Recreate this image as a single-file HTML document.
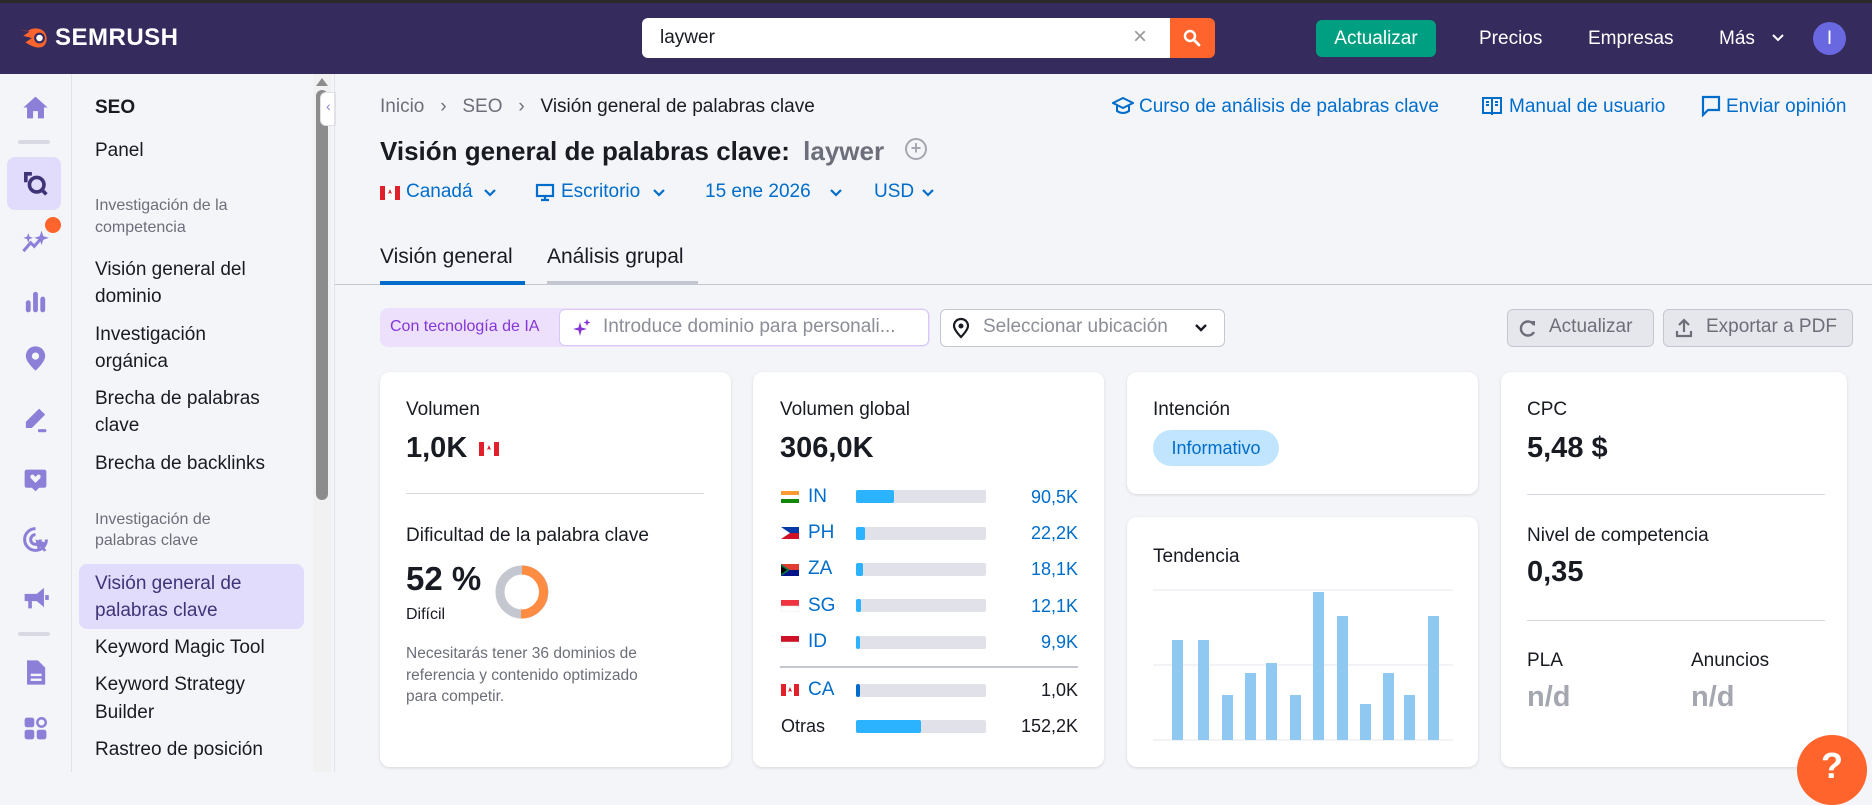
<!DOCTYPE html>
<html><head><meta charset="utf-8"><style>
*{box-sizing:border-box;margin:0;padding:0}
body{width:1872px;height:772px;overflow:hidden;background:#f4f5f9;font-family:"Liberation Sans",Arial,sans-serif;color:#191b23;position:relative}
.a{position:absolute;white-space:nowrap}
.top{left:0;top:0;width:1872px;height:74px;background:#352b5c;border-top:3px solid #2a2a2a}
.nav{font-size:19px;color:#191b23}
.sec{font-size:16px;color:#6c6e79}
.card{position:absolute;background:#fff;border-radius:10px;box-shadow:0 1px 3px rgba(0,0,0,.12)}
.lbl{font-size:19px}
.big{font-size:29px;font-weight:bold}
.blue{color:#006dca}
.bar{position:absolute;left:856px;width:130px;height:13px;background:#e0e1e9;border-radius:2px}
.bar i{position:absolute;left:0;top:0;height:13px;background:#2bb3ff;border-radius:2px}
.flag{position:absolute;left:781px;width:18px;height:12px}
.cc{font-size:19px;color:#006dca;left:808px}
.val{font-size:18px;right:794px;text-align:right}
.ic{position:absolute;left:21px;width:29px;height:29px}
</style></head><body>
<div class="a top"></div>
<!-- logo -->
<svg class="a" style="left:16px;top:25px" width="34" height="26" viewBox="0 0 30 24"><path d="M2 4 L12 6 L6 10 L14 12 L8 16 C14 20 20 22 24 20 C30 16 28 6 22 4 C16 2 12 4 10 6 Z" fill="#ff642d"/><circle cx="21" cy="12" r="5" fill="#352b5c"/><circle cx="21" cy="12" r="3" fill="#fff"/></svg>
<div class="a" style="left:55px;top:24px;font-size:24px;font-weight:bold;color:#fff;letter-spacing:0.5px">SEMRUSH</div>
<!-- search -->
<div class="a" style="left:642px;top:18px;width:530px;height:40px;background:#fff;border-radius:6px 0 0 6px"></div>
<div class="a" style="left:660px;top:27px;font-size:19px;color:#191b23">laywer</div>
<div class="a" style="left:1133px;top:23px;font-size:24px;color:#999">×</div>
<div class="a" style="left:1170px;top:18px;width:45px;height:40px;background:#ff642d;border-radius:0 6px 6px 0"></div>
<svg class="a" style="left:1182px;top:28px" width="20" height="20" viewBox="0 0 20 20"><circle cx="8" cy="8" r="5" stroke="#fff" stroke-width="2.5" fill="none"/><path d="M12 12 L17 17" stroke="#fff" stroke-width="2.8" stroke-linecap="round"/></svg>
<div class="a" style="left:1316px;top:20px;width:120px;height:37px;background:#009f81;border-radius:6px;color:#fff;font-size:19px;text-align:center;line-height:37px">Actualizar</div>
<div class="a" style="left:1479px;top:28px;font-size:19px;color:#fff">Precios</div>
<div class="a" style="left:1588px;top:28px;font-size:19px;color:#fff">Empresas</div>
<div class="a" style="left:1719px;top:28px;font-size:19px;color:#fff">Más</div>
<svg class="a" style="left:1771px;top:33px" width="14" height="10"><path d="M2 2 L7 7 L12 2" stroke="#fff" stroke-width="2" fill="none"/></svg>
<div class="a" style="left:1813px;top:22px;width:33px;height:33px;border-radius:50%;background:#6a68e0;color:#fff;text-align:center;line-height:33px;font-size:19px">I</div>

<!-- rail -->
<div class="a" style="left:0;top:74px;width:72px;height:698px;border-right:1px solid #e0e1e9;background:#f4f5f9"></div>
<svg class="ic" style="top:93px" viewBox="0 0 24 24"><path d="M2 12 L12 3 L22 12 L19 12 L19 21 L14 21 L14 15 L10 15 L10 21 L5 21 L5 12 Z" fill="#8c7fd8"/></svg>
<div class="a" style="left:18px;top:140px;width:32px;height:4px;background:#d8d9e3;border-radius:2px"></div>
<div class="a" style="left:7px;top:157px;width:54px;height:53px;background:#e1dcfc;border-radius:8px"></div>
<svg class="ic" style="top:169px" viewBox="0 0 24 24"><circle cx="13" cy="13" r="6" stroke="#403378" stroke-width="3" fill="none"/><path d="M17 17 L21 21 M9 4 L4 4 L4 11" stroke="#403378" stroke-width="3" fill="none"/></svg>
<svg class="ic" style="top:227px" viewBox="0 0 24 24"><path d="M2 20 L8 13 L11 16 L17 9" stroke="#8c7fd8" stroke-width="2.5" fill="none"/><path d="M17 3 L18.5 7.5 L23 9 L18.5 10.5 L17 15 L15.5 10.5 L11 9 L15.5 7.5 Z M6 5 L7 8 L10 9 L7 10 L6 13 L5 10 L2 9 L5 8Z" fill="#8c7fd8"/></svg>
<div class="a" style="left:45px;top:217px;width:16px;height:16px;border-radius:50%;background:#ff642d"></div>
<svg class="ic" style="top:287px" viewBox="0 0 24 24"><rect x="4" y="11" width="4" height="10" rx="2" fill="#8c7fd8"/><rect x="10" y="4" width="4" height="17" rx="2" fill="#8c7fd8"/><rect x="16" y="8" width="4" height="13" rx="2" fill="#8c7fd8"/></svg>
<svg class="ic" style="top:344px" viewBox="0 0 24 24"><path d="M12 2 C7 2 4 6 4 10 C4 15 12 22 12 22 C12 22 20 15 20 10 C20 6 17 2 12 2Z" fill="#8c7fd8"/><circle cx="12" cy="10" r="3" fill="#f4f5f9"/></svg>
<svg class="ic" style="top:405px" viewBox="0 0 24 24"><path d="M4 19 L4 14 L15 3 L20 8 L9 19 Z" fill="#8c7fd8"/><rect x="14" y="20" width="7" height="2.5" rx="1" fill="#8c7fd8"/></svg>
<svg class="ic" style="top:466px" viewBox="0 0 24 24"><path d="M3 5 Q3 3 5 3 L19 3 Q21 3 21 5 L21 16 Q21 18 19 18 L15 18 L12 21 L9 18 L5 18 Q3 18 3 16Z" fill="#8c7fd8"/><path d="M12 14 L8 10 Q7 7 10 7 L12 9 L14 7 Q17 7 16 10Z" fill="#f4f5f9"/></svg>
<svg class="ic" style="top:525px" viewBox="0 0 24 24"><path d="M12 3 A9 9 0 1 0 21 12" stroke="#8c7fd8" stroke-width="2.5" fill="none"/><path d="M12 8 A4 4 0 1 0 16 12" stroke="#8c7fd8" stroke-width="2.5" fill="none"/><path d="M12 12 L22 15 L18 17 L21 21 L19 22 L16 18 L14 21Z" fill="#8c7fd8"/></svg>
<svg class="ic" style="top:583px" viewBox="0 0 24 24"><path d="M3 9 L13 9 L19 4 L19 20 L13 15 L9 15 L9 21 L6 21 L6 15 L3 15Z" fill="#8c7fd8"/><rect x="20" y="10" width="3" height="4" fill="#8c7fd8"/></svg>
<div class="a" style="left:18px;top:632px;width:32px;height:4px;background:#d8d9e3;border-radius:2px"></div>
<svg class="ic" style="top:658px" viewBox="0 0 24 24"><path d="M5 2 L14 2 L20 8 L20 22 L5 22Z" fill="#8c7fd8"/><rect x="8" y="13" width="9" height="2" fill="#f4f5f9"/><rect x="8" y="17" width="9" height="2" fill="#f4f5f9"/></svg>
<svg class="ic" style="top:714px" viewBox="0 0 24 24"><rect x="3" y="3" width="8" height="8" rx="2" fill="#8c7fd8"/><circle cx="17" cy="7" r="3.5" stroke="#8c7fd8" stroke-width="2" fill="none"/><rect x="3" y="13" width="8" height="8" rx="2" fill="#8c7fd8"/><rect x="13" y="13" width="8" height="8" rx="2" fill="#8c7fd8"/></svg>

<!-- nav panel -->
<div class="a" style="left:95px;top:97px;font-size:19px;font-weight:bold">SEO</div>
<div class="a nav" style="left:95px;top:140px">Panel</div>
<div class="a sec" style="left:95px;top:197px">Investigación de la</div>
<div class="a sec" style="left:95px;top:219px">competencia</div>
<div class="a nav" style="left:95px;top:259px">Visión general del</div>
<div class="a nav" style="left:95px;top:286px">dominio</div>
<div class="a nav" style="left:95px;top:324px">Investigación</div>
<div class="a nav" style="left:95px;top:351px">orgánica</div>
<div class="a nav" style="left:95px;top:388px">Brecha de palabras</div>
<div class="a nav" style="left:95px;top:415px">clave</div>
<div class="a nav" style="left:95px;top:453px">Brecha de backlinks</div>
<div class="a sec" style="left:95px;top:511px">Investigación de</div>
<div class="a sec" style="left:95px;top:532px">palabras clave</div>
<div class="a" style="left:79px;top:564px;width:225px;height:65px;background:#e1dcfc;border-radius:8px"></div>
<div class="a nav" style="left:95px;top:573px;color:#403378">Visión general de</div>
<div class="a nav" style="left:95px;top:600px;color:#403378">palabras clave</div>
<div class="a nav" style="left:95px;top:637px">Keyword Magic Tool</div>
<div class="a nav" style="left:95px;top:674px">Keyword Strategy</div>
<div class="a nav" style="left:95px;top:702px">Builder</div>
<div class="a nav" style="left:95px;top:739px">Rastreo de posición</div>
<!-- scrollbar -->
<div class="a" style="left:313px;top:74px;width:18px;height:698px;background:#f1f1f1"></div>
<div class="a" style="left:316px;top:90px;width:12px;height:410px;background:#8c8c8c;border-radius:6px"></div>
<div class="a" style="left:316px;top:78px;width:0;height:0;border-left:6px solid transparent;border-right:6px solid transparent;border-bottom:8px solid #8c8c8c"></div>
<div class="a" style="left:320px;top:92px;width:16px;height:34px;background:#fff;border:1px solid #e0e1e9;border-radius:6px 0 0 6px"></div>
<div class="a" style="left:326px;top:98px;font-size:14px;color:#8c7fd8">‹</div>
<div class="a" style="left:334px;top:74px;width:1px;height:698px;background:#e0e1e9"></div>

<!-- breadcrumb -->
<div class="a" style="left:380px;top:96px;font-size:19px;color:#6c6e79">Inicio &nbsp;&nbsp;›&nbsp;&nbsp; SEO &nbsp;&nbsp;›&nbsp;&nbsp; <span style="color:#191b23">Visión general de palabras clave</span></div>
<svg class="a" style="left:1112px;top:96px" width="22" height="20" viewBox="0 0 22 20"><path d="M11 2 L21 7 L11 12 L1 7Z" fill="none" stroke="#006dca" stroke-width="2"/><path d="M5 10 L5 15 Q11 19 17 15 L17 10" fill="none" stroke="#006dca" stroke-width="2"/></svg>
<div class="a blue" style="left:1139px;top:96px;font-size:19px">Curso de análisis de palabras clave</div>
<svg class="a" style="left:1481px;top:95px" width="22" height="22" viewBox="0 0 22 22"><rect x="2" y="3" width="18" height="15" fill="none" stroke="#006dca" stroke-width="2"/><path d="M11 3 L11 20" stroke="#006dca" stroke-width="2"/><path d="M5 7h3M5 10h3M14 7h3M14 10h3" stroke="#006dca" stroke-width="2"/></svg>
<div class="a blue" style="left:1509px;top:96px;font-size:19px">Manual de usuario</div>
<svg class="a" style="left:1701px;top:95px" width="20" height="22" viewBox="0 0 20 22"><path d="M2 2 L18 2 L18 15 L7 15 L2 20Z" fill="none" stroke="#006dca" stroke-width="2.2"/></svg>
<div class="a blue" style="left:1726px;top:96px;font-size:19px">Enviar opinión</div>

<div class="a" style="left:380px;top:136px;font-size:26px;font-weight:bold">Visión general de palabras clave: <span style="color:#6c6e79;margin-left:6px">laywer</span></div>
<div class="a" style="left:905px;top:138px;width:22px;height:22px;border:2px solid #a5a7b0;border-radius:50%;color:#a5a7b0;text-align:center;line-height:17px;font-size:18px;font-weight:bold">+</div>

<svg class="a" style="left:380px;top:186px" width="20" height="14"><rect width="20" height="14" fill="#fff"/><rect width="5" height="14" fill="#e0202b"/><rect x="15" width="5" height="14" fill="#e0202b"/><path d="M10 3 L12 8 L10 7 L8 8Z" fill="#e0202b"/></svg>
<div class="a blue" style="left:406px;top:181px;font-size:19px">Canadá</div>
<svg class="a" style="left:483px;top:188px" width="14" height="10"><path d="M2 2 L7 7 L12 2" stroke="#006dca" stroke-width="2.2" fill="none"/></svg>
<svg class="a" style="left:535px;top:183px" width="20" height="20" viewBox="0 0 20 20"><rect x="2" y="2" width="16" height="11" fill="none" stroke="#006dca" stroke-width="2.2"/><path d="M10 13 L10 17 M6 17 L14 17" stroke="#006dca" stroke-width="2.2"/></svg>
<div class="a blue" style="left:561px;top:181px;font-size:19px">Escritorio</div>
<svg class="a" style="left:652px;top:188px" width="14" height="10"><path d="M2 2 L7 7 L12 2" stroke="#006dca" stroke-width="2.2" fill="none"/></svg>
<div class="a blue" style="left:705px;top:181px;font-size:19px">15 ene 2026</div>
<svg class="a" style="left:829px;top:188px" width="14" height="10"><path d="M2 2 L7 7 L12 2" stroke="#006dca" stroke-width="2.2" fill="none"/></svg>
<div class="a blue" style="left:874px;top:181px;font-size:19px">USD</div>
<svg class="a" style="left:921px;top:188px" width="14" height="10"><path d="M2 2 L7 7 L12 2" stroke="#006dca" stroke-width="2.2" fill="none"/></svg>

<!-- tabs -->
<div class="a" style="left:380px;top:245px;font-size:21px">Visión general</div>
<div class="a" style="left:547px;top:245px;font-size:21px">Análisis grupal</div>
<div class="a" style="left:335px;top:284px;width:1537px;height:1px;background:#c4c7cf"></div>
<div class="a" style="left:380px;top:281px;width:145px;height:4px;background:#006dca"></div>
<div class="a" style="left:547px;top:281px;width:151px;height:4px;background:#c4c7cf"></div>

<!-- AI row -->
<div class="a" style="left:380px;top:308px;width:550px;height:39px;background:#ece0fc;border-radius:8px"></div>
<div class="a" style="left:390px;top:318px;font-size:16px;color:#8436d6">Con tecnología de IA</div>
<div class="a" style="left:559px;top:309px;width:370px;height:37px;background:#fff;border:1px solid #d9c8f5;border-radius:6px"></div>
<svg class="a" style="left:572px;top:318px" width="20" height="20" viewBox="0 0 20 20"><path d="M8 4 L9.5 9.5 L15 11 L9.5 12.5 L8 18 L6.5 12.5 L1 11 L6.5 9.5Z M15 1 L16 3.5 L18.5 4.5 L16 5.5 L15 8 L14 5.5 L11.5 4.5 L14 3.5Z" fill="#8436d6"/></svg>
<div class="a" style="left:603px;top:316px;font-size:19px;color:#8b8d98">Introduce dominio para personali...</div>
<div class="a" style="left:940px;top:309px;width:285px;height:38px;background:#fff;border:1px solid #c4c7cf;border-radius:6px"></div>
<svg class="a" style="left:952px;top:317px" width="18" height="22" viewBox="0 0 18 22"><path d="M9 2 C5 2 2 5 2 9 C2 13 9 20 9 20 C9 20 16 13 16 9 C16 5 13 2 9 2Z" fill="none" stroke="#191b23" stroke-width="2.2"/><circle cx="9" cy="9" r="2.5" fill="#191b23"/></svg>
<div class="a" style="left:983px;top:316px;font-size:19px;color:#8b8d98">Seleccionar ubicación</div>
<svg class="a" style="left:1194px;top:323px" width="14" height="10"><path d="M2 2 L7 7 L12 2" stroke="#191b23" stroke-width="2.4" fill="none"/></svg>
<div class="a" style="left:1507px;top:309px;width:147px;height:38px;background:#e6e7ec;border:1px solid #c4c7cf;border-radius:6px"></div>
<svg class="a" style="left:1518px;top:318px" width="20" height="20" viewBox="0 0 20 20"><path d="M16 7 A7 7 0 1 0 16 14" fill="none" stroke="#6c6e79" stroke-width="2.4"/><path d="M12 3 L17 3 L17 8Z" fill="#6c6e79"/></svg>
<div class="a" style="left:1549px;top:316px;font-size:19px;color:#6c6e79">Actualizar</div>
<div class="a" style="left:1663px;top:309px;width:190px;height:38px;background:#e6e7ec;border:1px solid #c4c7cf;border-radius:6px"></div>
<svg class="a" style="left:1674px;top:317px" width="20" height="22" viewBox="0 0 20 22"><path d="M10 15 L10 4 M5 8 L10 3 L15 8 M3 14 L3 19 L17 19 L17 14" fill="none" stroke="#6c6e79" stroke-width="2.2"/></svg>
<div class="a" style="left:1706px;top:316px;font-size:19px;color:#6c6e79">Exportar a PDF</div>

<!-- card 1 -->
<div class="card" style="left:380px;top:372px;width:351px;height:395px"></div>
<div class="a lbl" style="left:406px;top:399px">Volumen</div>
<div class="a big" style="left:406px;top:432px">1,0K</div>
<svg class="a" style="left:479px;top:442px" width="20" height="14"><rect width="20" height="14" fill="#fff"/><rect width="5" height="14" fill="#e0202b"/><rect x="15" width="5" height="14" fill="#e0202b"/><path d="M10 3 L12 8 L10 7 L8 8Z" fill="#e0202b"/></svg>
<div class="a" style="left:406px;top:493px;width:298px;height:1px;background:#d5d7de"></div>
<div class="a lbl" style="left:406px;top:525px">Dificultad de la palabra clave</div>
<div class="a" style="left:406px;top:560px;font-size:33px;font-weight:bold">52 %</div>
<div class="a" style="left:406px;top:606px;font-size:16px">Difícil</div>
<svg class="a" style="left:494px;top:564px" width="56" height="56" viewBox="0 0 56 56"><circle cx="28" cy="28" r="22" fill="none" stroke="#c4c7cf" stroke-width="9"/><path d="M28 6 A22 22 0 0 1 27 50" fill="none" stroke="#ff8c43" stroke-width="9"/></svg>
<div class="a" style="left:406px;top:643px;font-size:15.5px;color:#6c6e79;line-height:21.5px">Necesitarás tener 36 dominios de<br>referencia y contenido optimizado<br>para competir.</div>

<!-- card 2 -->
<div class="card" style="left:753px;top:372px;width:351px;height:395px"></div>
<div class="a lbl" style="left:780px;top:399px">Volumen global</div>
<div class="a big" style="left:780px;top:432px">306,0K</div>
<svg class="flag" style="top:491px"><rect width="18" height="4" fill="#ff9933"/><rect y="4" width="18" height="4" fill="#fff"/><rect y="8" width="18" height="4" fill="#138808"/></svg>
<div class="a cc" style="top:486px">IN</div><div class="bar" style="top:490px"><i style="width:38px"></i></div><div class="a val blue" style="top:487px">90,5K</div>
<svg class="flag" style="top:527px"><rect width="18" height="6" fill="#0038a8"/><rect y="6" width="18" height="6" fill="#ce1126"/><path d="M0 0 L9 6 L0 12Z" fill="#fff"/></svg>
<div class="a cc" style="top:522px">PH</div><div class="bar" style="top:527px"><i style="width:9px"></i></div><div class="a val blue" style="top:523px">22,2K</div>
<svg class="flag" style="top:564px"><rect width="18" height="6" fill="#e03c31"/><rect y="6" width="18" height="6" fill="#001489"/><path d="M0 0 L9 6 L0 12Z" fill="#007749"/><path d="M0 2 L6 6 L0 10Z" fill="#000"/></svg>
<div class="a cc" style="top:558px">ZA</div><div class="bar" style="top:563px"><i style="width:7px"></i></div><div class="a val blue" style="top:559px">18,1K</div>
<svg class="flag" style="top:600px"><rect width="18" height="6" fill="#ef3340"/><rect y="6" width="18" height="6" fill="#fff" stroke="#ddd" stroke-width=".5"/></svg>
<div class="a cc" style="top:595px">SG</div><div class="bar" style="top:599px"><i style="width:5px"></i></div><div class="a val blue" style="top:596px">12,1K</div>
<svg class="flag" style="top:636px"><rect width="18" height="6" fill="#ce1126"/><rect y="6" width="18" height="6" fill="#fff" stroke="#ddd" stroke-width=".5"/></svg>
<div class="a cc" style="top:631px">ID</div><div class="bar" style="top:636px"><i style="width:4px"></i></div><div class="a val blue" style="top:632px">9,9K</div>
<div class="a" style="left:780px;top:666px;width:298px;height:2px;background:#c4c7cf"></div>
<svg class="flag" style="top:684px"><rect width="18" height="12" fill="#fff"/><rect width="5" height="12" fill="#e0202b"/><rect x="13" width="5" height="12" fill="#e0202b"/><path d="M9 3 L11 8 L9 7 L7 8Z" fill="#e0202b"/></svg>
<div class="a cc" style="top:679px">CA</div><div class="bar" style="top:684px"><i style="width:4px;background:#006dca"></i></div><div class="a val" style="top:680px">1,0K</div>
<div class="a" style="left:781px;top:716px;font-size:18px">Otras</div><div class="bar" style="top:720px"><i style="width:65px"></i></div><div class="a val" style="top:716px">152,2K</div>

<!-- card 3 -->
<div class="card" style="left:1127px;top:372px;width:351px;height:122px"></div>
<div class="a lbl" style="left:1153px;top:399px">Intención</div>
<div class="a" style="left:1153px;top:430px;width:126px;height:36px;background:#c2e5ff;border-radius:18px;color:#006dca;font-size:18px;text-align:center;line-height:36px">Informativo</div>
<div class="card" style="left:1127px;top:517px;width:351px;height:250px"></div>
<div class="a lbl" style="left:1153px;top:546px">Tendencia</div>
<svg class="a" style="left:1153px;top:585px" width="300" height="182">
<line x1="0" y1="5" x2="300" y2="5" stroke="#e6e7ec"/><line x1="0" y1="80" x2="300" y2="80" stroke="#e6e7ec"/><line x1="0" y1="155" x2="300" y2="155" stroke="#e6e7ec"/>
<g fill="#8fc8f0">
<rect x="19" y="55" width="11" height="100"/><rect x="45" y="55" width="11" height="100"/><rect x="69" y="110" width="11" height="45"/><rect x="92" y="88" width="11" height="67"/><rect x="113" y="78" width="11" height="77"/><rect x="137" y="110" width="11" height="45"/><rect x="160" y="7" width="11" height="148"/><rect x="184" y="31" width="11" height="124"/><rect x="207" y="119" width="11" height="36"/><rect x="230" y="88" width="11" height="67"/><rect x="251" y="110" width="11" height="45"/><rect x="275" y="31" width="11" height="124"/>
</g></svg>

<!-- card 4 -->
<div class="card" style="left:1501px;top:372px;width:346px;height:395px"></div>
<div class="a lbl" style="left:1527px;top:399px">CPC</div>
<div class="a big" style="left:1527px;top:432px">5,48 $</div>
<div class="a" style="left:1527px;top:494px;width:298px;height:1px;background:#d5d7de"></div>
<div class="a lbl" style="left:1527px;top:525px">Nivel de competencia</div>
<div class="a big" style="left:1527px;top:556px">0,35</div>
<div class="a" style="left:1527px;top:620px;width:298px;height:1px;background:#d5d7de"></div>
<div class="a lbl" style="left:1527px;top:650px">PLA</div>
<div class="a lbl" style="left:1691px;top:650px">Anuncios</div>
<div class="a big" style="left:1527px;top:681px;color:#a5a7b0">n/d</div>
<div class="a big" style="left:1691px;top:681px;color:#a5a7b0">n/d</div>

<div class="a" style="left:1797px;top:735px;width:70px;height:70px;border-radius:50%;background:#ff642d;color:#fff;font-size:36px;text-align:center;line-height:62px;font-weight:bold">?</div>
</body></html>
